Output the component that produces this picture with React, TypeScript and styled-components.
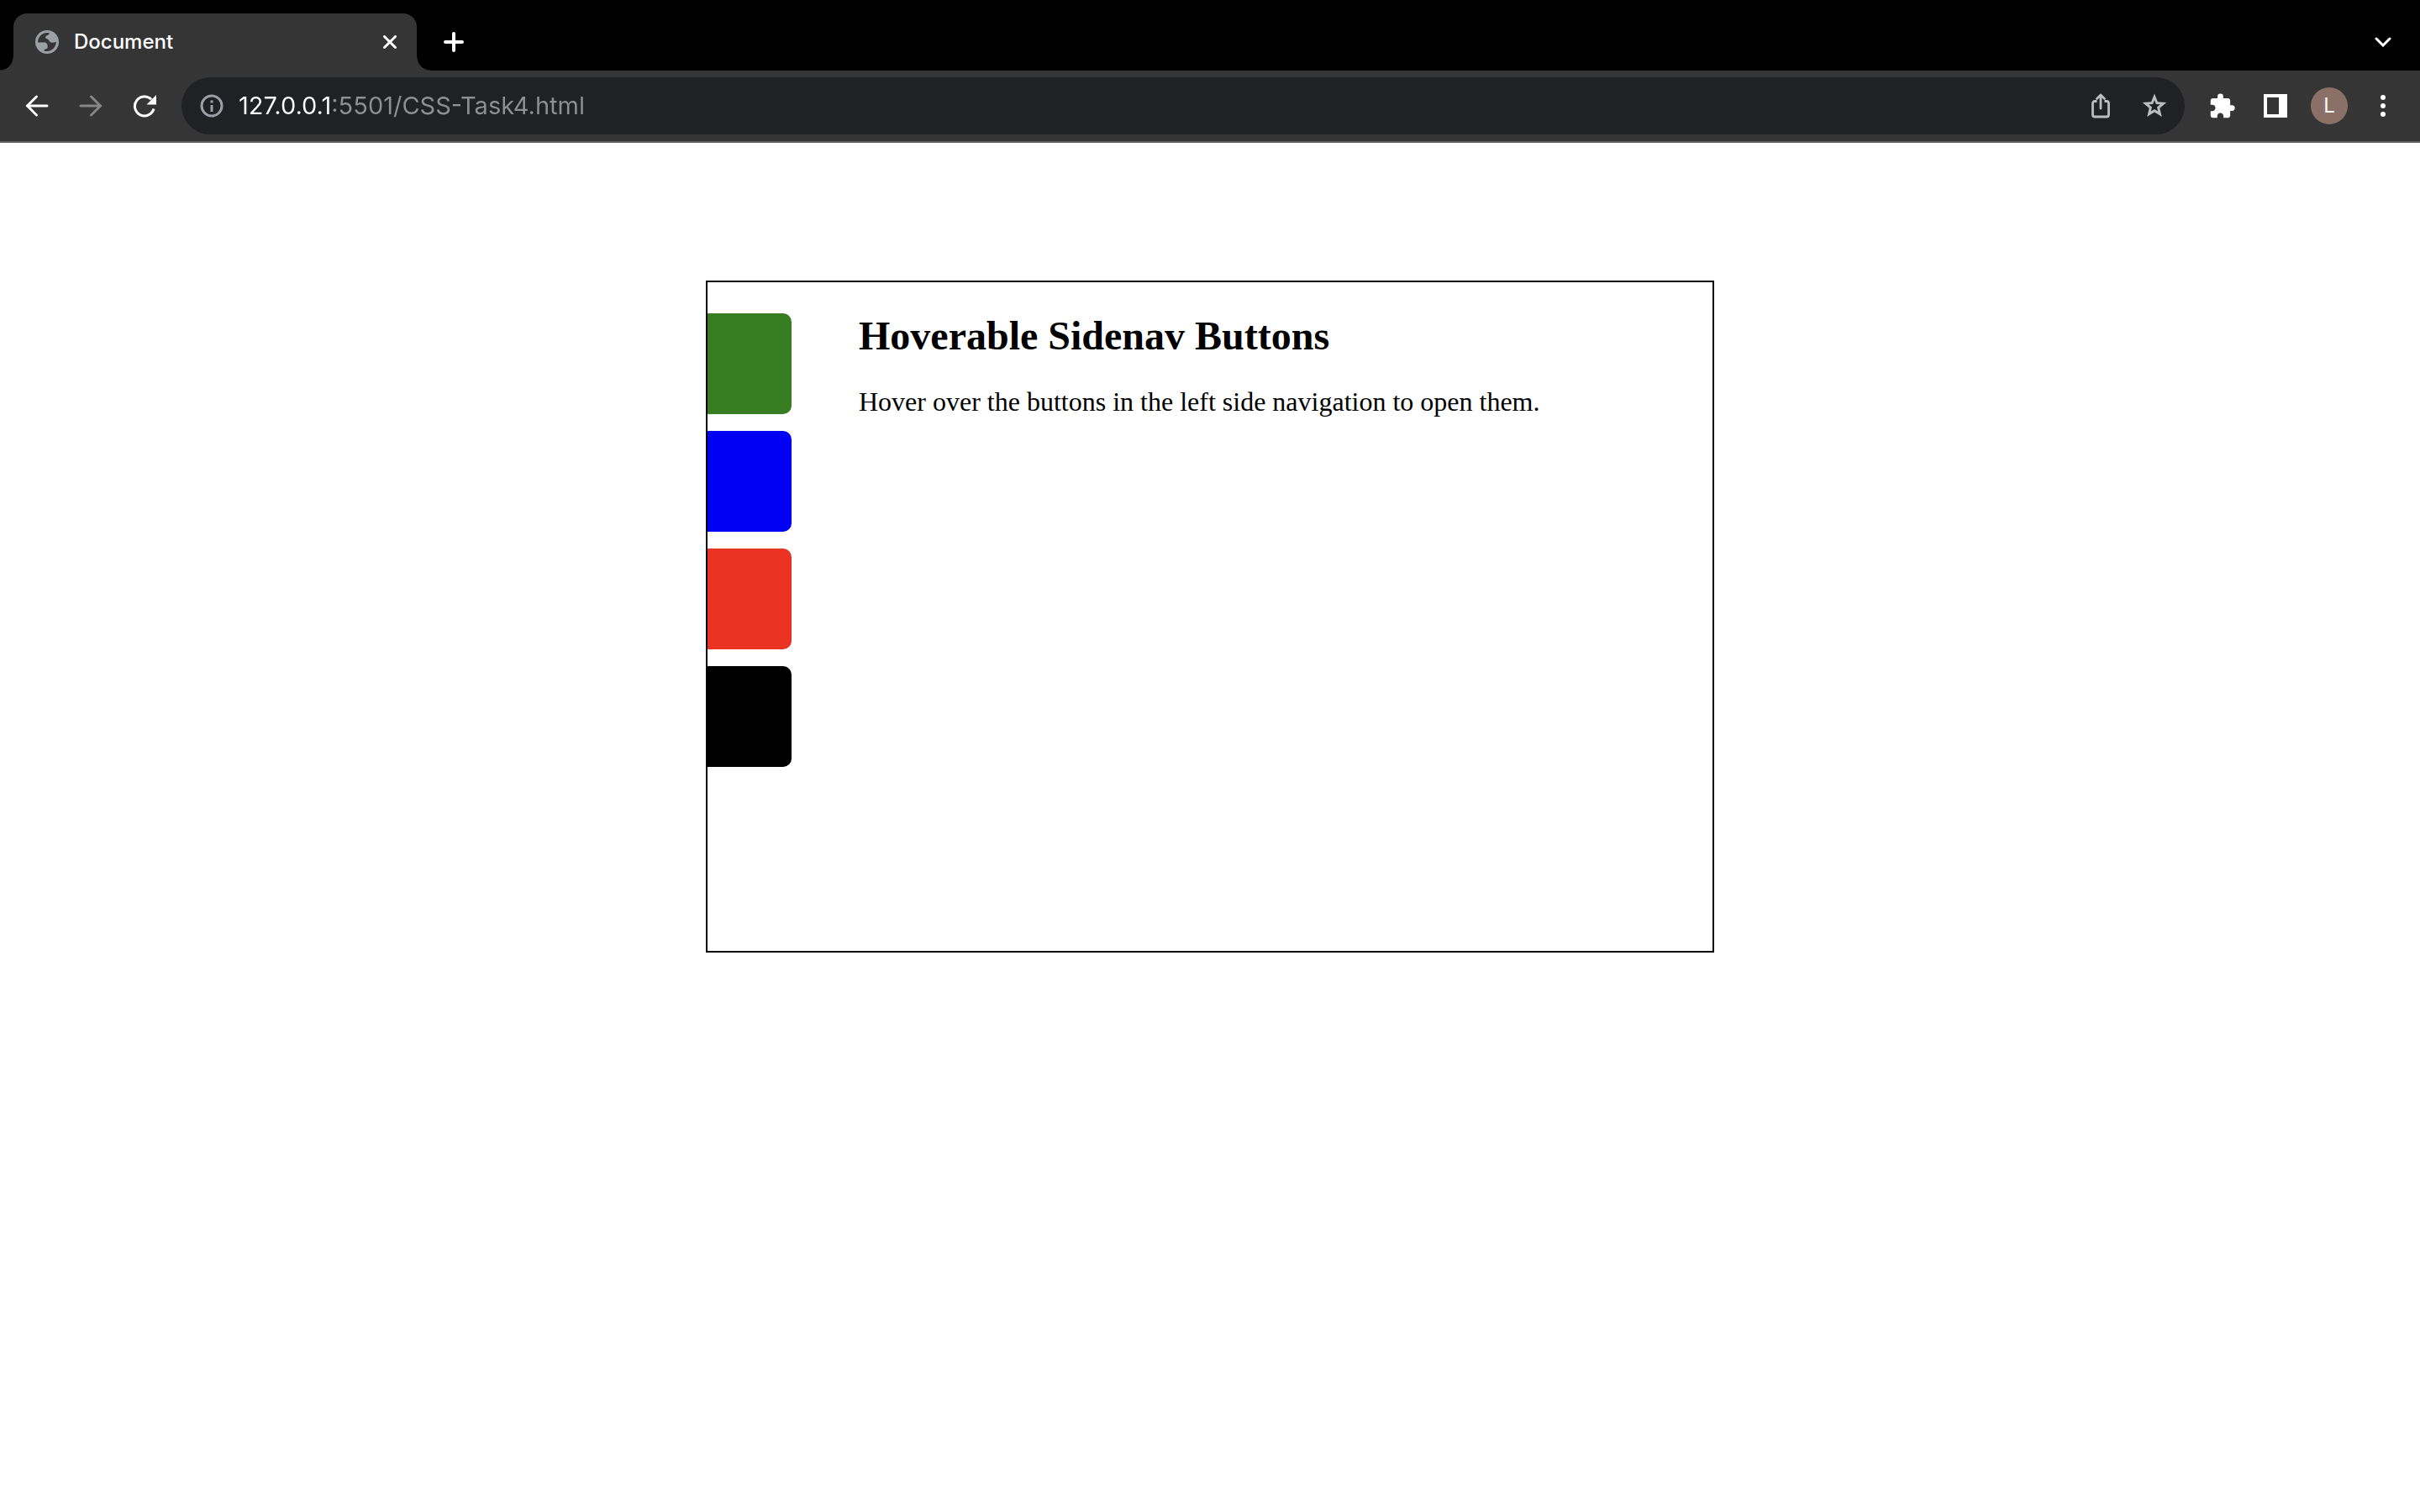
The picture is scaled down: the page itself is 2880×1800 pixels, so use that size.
import React from "react";
import styled, { createGlobalStyle } from "styled-components";
import { MdExtension } from "react-icons/md";

const GlobalStyle = createGlobalStyle`
  *, *::before, *::after { box-sizing: border-box; }
  body { margin: 0; background: #fff; }
`;

const uiFont = `Inter, "Liberation Sans", sans-serif`;
const pageFont = `"Liberation Serif", "Times New Roman", serif`;

const Chrome = styled.header`
  font-family: ${uiFont};
  background: #353535;
  border-bottom: 2px solid #5f5d5e;
`;

const TabStrip = styled.div`
  display: flex;
  justify-content: space-between;
  height: 84px;
  padding: 16px 16px 0;
  background: #000;
`;

const TabGroup = styled.div`
  display: flex;
`;

const Tab = styled.div`
  position: relative;
  display: flex;
  align-items: center;
  gap: 18px;
  width: 480px;
  padding: 0 16px 0 26px;
  border-radius: 16px 16px 0 0;
  background: #353535;

  &::before,
  &::after {
    content: "";
    position: absolute;
    bottom: 0;
    width: 16px;
    height: 16px;
  }
  &::before {
    left: -16px;
    background: radial-gradient(circle at 0 0, #000 15px, #353535 16px);
  }
  &::after {
    right: -16px;
    background: radial-gradient(circle at 100% 0, #000 15px, #353535 16px);
  }
`;

const TabTitle = styled.span`
  flex: 1;
  color: #fff;
  font-size: 24px;
  font-weight: 500;
  line-height: 32px;
`;

const IconButton = styled.button<{ $size?: number; $color?: string }>`
  display: grid;
  place-items: center;
  flex: none;
  width: ${(p) => p.$size ?? 64}px;
  height: ${(p) => p.$size ?? 64}px;
  padding: 0;
  border: 0;
  border-radius: 50%;
  background: transparent;
  color: ${(p) => p.$color ?? "#fff"};
  cursor: pointer;

  svg { display: block; }
`;

const StripButton = styled(IconButton)`
  align-self: center;
`;

const Toolbar = styled.div`
  display: flex;
  align-items: center;
  height: 84px;
  padding: 0 12px;
`;

const AddressBar = styled.form`
  display: flex;
  flex: 1;
  align-items: center;
  height: 68px;
  margin: 0 12px;
  padding: 0 4px;
  border-radius: 34px;
  background: #202124;
`;

const AddressInput = styled.input`
  flex: 1;
  min-width: 0;
  height: 44px;
  padding: 0;
  border: 0;
  outline: 0;
  font: 29px/44px ${uiFont};
  color: transparent;
  caret-color: #fff;
  background: linear-gradient(to right, #fff 112px, #8f8f90 112px);
  background-clip: text;
  -webkit-background-clip: text;
`;

const Avatar = styled.span`
  display: grid;
  place-items: center;
  width: 44px;
  height: 44px;
  border-radius: 50%;
  background: #8a7066;
  color: #fff;
  font: 24px/32px ${uiFont};
`;

const Main = styled.main`
  display: flex;
  justify-content: center;
  padding: 164px 16px;
  font-family: ${pageFont};
  color: #000;
`;

const Panel = styled.section`
  display: flex;
  gap: 80px;
  width: 100%;
  max-width: 1200px;
  min-height: 800px;
  border: 2px solid #000;
`;

const SideNav = styled.nav`
  display: flex;
  flex-direction: column;
  flex: none;
  gap: 20px;
  width: 100px;
  padding-top: 37px;
`;

const NavButton = styled.button<{ $color: string }>`
  height: 120px;
  padding: 0;
  border: 0;
  border-radius: 0 10px 10px 0;
  background: ${(p) => p.$color};
  cursor: pointer;
`;

const Copy = styled.div`
  padding-top: 36px;
`;

const Heading = styled.h2`
  margin: 0 0 30px;
  font-size: 48px;
  line-height: 56px;
`;

const Text = styled.p`
  margin: 0;
  font-size: 32px;
  line-height: 40px;
`;

const navItems = [
  { name: "Green", color: "#377e22" },
  { name: "Blue", color: "#0000f5" },
  { name: "Red", color: "#ea3323" },
  { name: "Black", color: "#000" },
];

const GlobeIcon = () => (
  <svg width="28" height="28" viewBox="0 0 28 28" aria-hidden="true">
    <circle cx="14" cy="14" r="14" fill="#9aa0a6" />
    <path
      fill="#353535"
      d="M14 3c1 0 1.800.1 2.600.3-.1 1.200-.6 1.900-1.600 2.400-1.500.7-2.900 1.200-2.900 2.800 0 1.500 1.600 1.700 2.800 2.200 1.600.7 1.700 3.300 3.700 3.800 2 .5 3.900.2 6.300-.7C24.900 20 20 25 14 25c-1.400 0-2.500-.2-3.600-.6.2-1.300.9-1.900 2.200-2.100 1.600-.3 2.100-1.100 2.100-2.600 0-2.900-1-5.100-4-5.100H3C3 8 8 3 14 3z"
    />
  </svg>
);

const CloseIcon = () => (
  <svg width="16" height="16" viewBox="0 0 16 16" fill="none" stroke="currentColor" strokeWidth="3" strokeLinecap="round" aria-hidden="true">
    <path d="M1.500 1.500 14.500 14.500M14.500 1.500 1.500 14.500" />
  </svg>
);

const PlusIcon = () => (
  <svg width="24" height="24" viewBox="0 0 24 24" fill="none" stroke="currentColor" strokeWidth="4" strokeLinecap="round" aria-hidden="true">
    <path d="M12 2v20M2 12h20" />
  </svg>
);

const ChevronIcon = () => (
  <svg width="20" height="12" viewBox="0 0 20 12" fill="none" stroke="currentColor" strokeWidth="3" strokeLinecap="round" aria-hidden="true">
    <path d="M2 2l8 8 8-8" />
  </svg>
);

const ArrowIcon = ({ flip }: { flip?: boolean }) => (
  <svg width="28" height="28" viewBox="0 0 28 28" fill="none" stroke="currentColor" strokeWidth="3" strokeLinecap="round" aria-hidden="true">
    <path d={flip ? "M2 14h23M14.500 3l11 11-11 11" : "M26 14H3M13.500 3l-11 11 11 11"} />
  </svg>
);

const ReloadIcon = () => (
  <svg width="28" height="28" viewBox="0 0 28 28" aria-hidden="true">
    <path d="M22 6.200A11.500 11.500 0 1 0 25 17.500" fill="none" stroke="currentColor" strokeWidth="3" />
    <path d="M28 1v11.500H16.500z" fill="currentColor" />
  </svg>
);

const InfoIcon = () => (
  <svg width="28" height="28" viewBox="0 0 28 28" aria-hidden="true">
    <circle cx="14" cy="14" r="12" fill="none" stroke="currentColor" strokeWidth="3" />
    <path d="M12.500 7.500h3v3h-3zM12.500 13h3v8h-3z" fill="currentColor" />
  </svg>
);

const ShareIcon = () => (
  <svg width="24" height="30" viewBox="0 0 24 30" fill="none" stroke="currentColor" strokeWidth="2.800" strokeLinejoin="round" aria-hidden="true">
    <path d="M7.500 9.500H5a2.500 2.500 0 0 0-2.500 2.500v13.500a2.500 2.500 0 0 0 2.500 2.500h14a2.500 2.500 0 0 0 2.500-2.500V12a2.500 2.500 0 0 0-2.500-2.500h-2.500" />
    <path d="M12 18V2.500M7.500 6.500l4.500-4.500 4.500 4.500" strokeLinecap="round" />
  </svg>
);

const StarIcon = () => (
  <svg width="30" height="30" viewBox="0 0 30 30" aria-hidden="true">
    <path
      fill="currentColor"
      fillRule="evenodd"
      d="M15 .5l3.900 9.700 10.400.8-8 6.800 2.500 10.300L15 22.600l-8.800 5.500 2.500-10.300-8-6.800 10.400-.8zM15 8.200l-1.900 4.700-5 .4 3.900 3.300-1.200 4.900 4.200-2.600 4.200 2.600-1.200-4.900 3.900-3.300-5-.4z"
    />
  </svg>
);

const SidePanelIcon = () => (
  <svg width="28" height="28" viewBox="0 0 28 28" aria-hidden="true">
    <path fill="currentColor" fillRule="evenodd" d="M0 0h28v28H0zM4 4v20h14V4z" />
  </svg>
);

const MenuIcon = () => (
  <svg width="6" height="26" viewBox="0 0 6 26" fill="currentColor" aria-hidden="true">
    <circle cx="3" cy="3" r="3" />
    <circle cx="3" cy="13" r="3" />
    <circle cx="3" cy="23" r="3" />
  </svg>
);

export default function App() {
  return (
    <>
      <GlobalStyle />
      <Chrome>
        <TabStrip>
          <TabGroup>
            <Tab>
              <GlobeIcon />
              <TabTitle>Document</TabTitle>
              <IconButton $size={32} aria-label="Close tab"><CloseIcon /></IconButton>
            </Tab>
            <StripButton $size={88} aria-label="New tab"><PlusIcon /></StripButton>
          </TabGroup>
          <StripButton $size={56} aria-label="Search tabs"><ChevronIcon /></StripButton>
        </TabStrip>
        <Toolbar>
          <IconButton aria-label="Back"><ArrowIcon /></IconButton>
          <IconButton $color="#868686" aria-label="Forward"><ArrowIcon flip /></IconButton>
          <IconButton aria-label="Reload"><ReloadIcon /></IconButton>
          <AddressBar onSubmit={(e) => e.preventDefault()}>
            <IconButton type="button" $color="#9aa0a6" aria-label="Site information"><InfoIcon /></IconButton>
            <AddressInput aria-label="Address" defaultValue="127.0.0.1:5501/CSS-Task4.html" spellCheck={false} />
            <IconButton type="button" $color="#bdbdbe" aria-label="Share"><ShareIcon /></IconButton>
            <IconButton type="button" $color="#bdbdbe" aria-label="Bookmark"><StarIcon /></IconButton>
          </AddressBar>
          <IconButton aria-label="Extensions"><MdExtension size={33} /></IconButton>
          <IconButton aria-label="Side panel"><SidePanelIcon /></IconButton>
          <IconButton aria-label="Profile"><Avatar>L</Avatar></IconButton>
          <IconButton aria-label="Menu"><MenuIcon /></IconButton>
        </Toolbar>
      </Chrome>
      <Main>
        <Panel>
          <SideNav aria-label="Side navigation">
            {navItems.map((item) => (
              <NavButton key={item.name} $color={item.color} aria-label={item.name} />
            ))}
          </SideNav>
          <Copy>
            <Heading>Hoverable Sidenav Buttons</Heading>
            <Text>Hover over the buttons in the left side navigation to open them.</Text>
          </Copy>
        </Panel>
      </Main>
    </>
  );
}
